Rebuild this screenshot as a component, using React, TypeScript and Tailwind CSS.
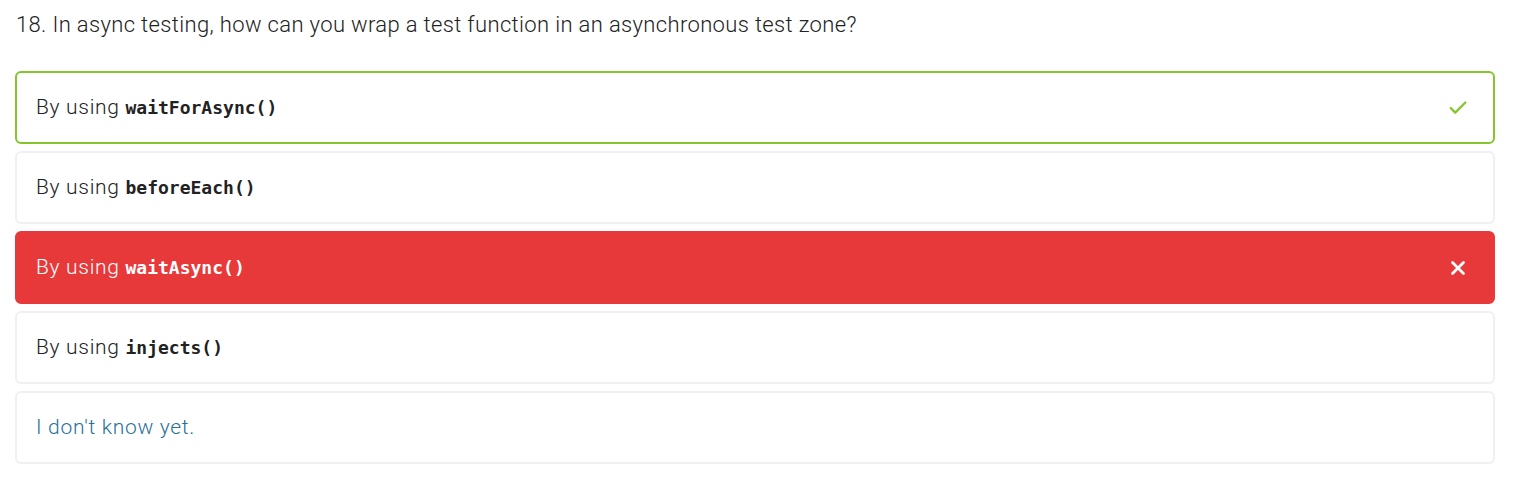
import { Check, X } from 'lucide-react';

type Choice = {
  label: string;
  code?: string;
  state?: 'correct' | 'wrong';
};

const choices: Choice[] = [
  { label: 'By using', code: 'waitForAsync()', state: 'correct' },
  { label: 'By using', code: 'beforeEach()' },
  { label: 'By using', code: 'waitAsync()', state: 'wrong' },
  { label: 'By using', code: 'injects()' },
  { label: "I don't know yet." },
];

export default function App() {
  return (
    <div className="min-h-screen bg-white px-[15px] pt-[11px] font-['Roboto',sans-serif]">
      <h2 className="pl-[1px] text-[22px] font-light leading-[28px] tracking-[0.35px] text-[#222]">
        18. In async testing, how can you wrap a test function in an asynchronous test zone?
      </h2>

      <div className="mt-[32px] flex w-[1480px] flex-col gap-[7px]">
        {choices.map((c, i) => {
          const box =
            c.state === 'correct'
              ? 'border-2 border-[#84c52c] bg-white text-[#222]'
              : c.state === 'wrong'
                ? 'border-2 border-[#e8393a] bg-[#e8393a] text-white'
                : 'border-2 border-[#f0f0f0] bg-white text-[#222]';
          return (
            <div
              key={i}
              className={`flex h-[73px] items-center justify-between rounded-[6px] pl-[19px] pr-[24px] ${box}`}
            >
              <span className="text-[21px] font-light tracking-[0.7px]">
                {c.code ? (
                  <>
                    {c.label}{' '}
                    <code className="font-['DejaVu_Sans_Mono',monospace] text-[18px] font-bold tracking-normal">
                      {c.code}
                    </code>
                  </>
                ) : (
                  <span className="text-[#2a6f97]">{c.label}</span>
                )}
              </span>
              {c.state === 'correct' && <Check className="h-[22px] w-[22px] text-[#84c52c]" strokeWidth={2.5} />}
              {c.state === 'wrong' && <X className="h-[22px] w-[22px] text-white" strokeWidth={3} />}
            </div>
          );
        })}
      </div>
    </div>
  );
}
